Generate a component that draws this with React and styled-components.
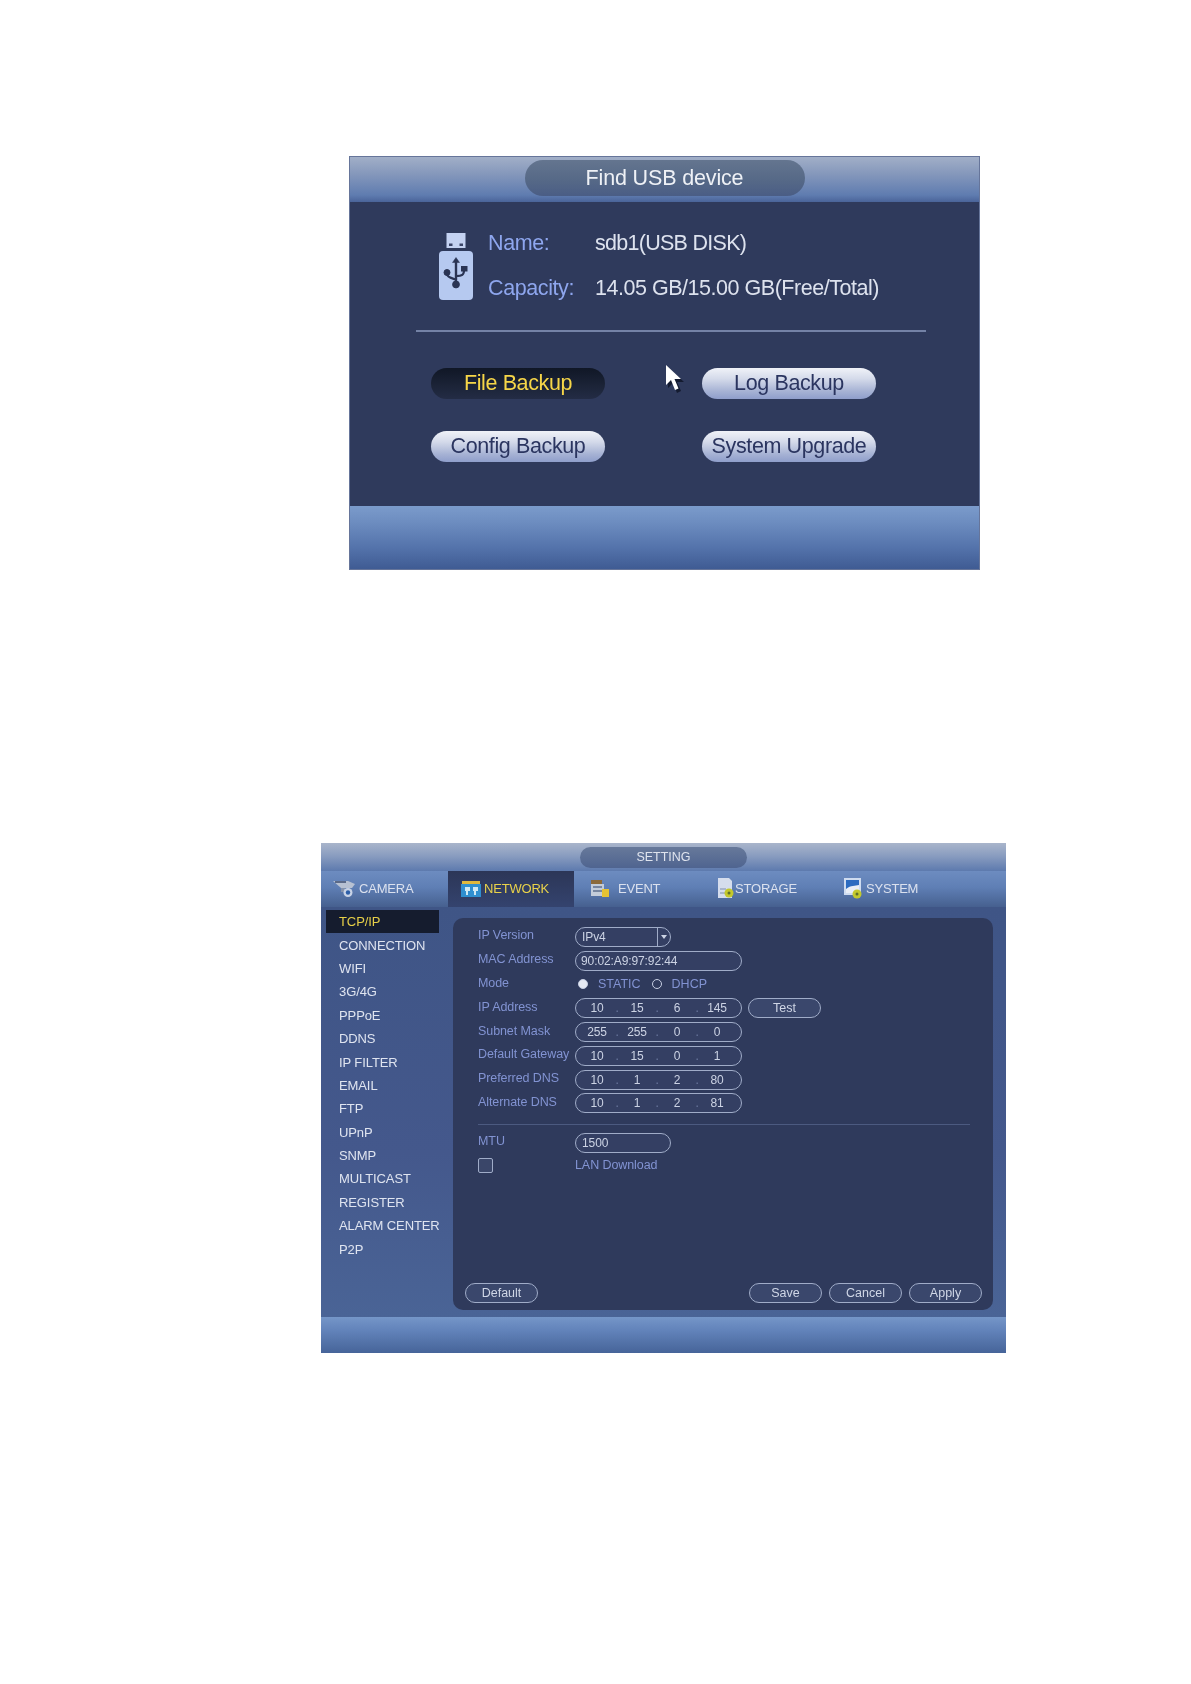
import React from "react";
import styled, { createGlobalStyle } from "styled-components";

const Global = createGlobalStyle`
  html, body { margin: 0; padding: 0; background: #fff; }
  body { font-family: "Liberation Sans", Arial, sans-serif; }
`;

const Page = styled.div`
  width: 1191px; height: 1684px; box-sizing: border-box;
  padding-top: 156px; background: #fff;
  display: flex; flex-direction: column; align-items: flex-start;
`;

/* ---------- first dialog ---------- */
const UsbDialog = styled.section`
  position: relative;
  margin-left: 349px; width: 631px; height: 414px;
  display: flex; flex-direction: column;
  filter: blur(0.4px);
  outline: 1px solid #66759a; outline-offset: -1px;
`;
const UsbHeader = styled.header`
  height: 46px; flex: none;
  display: flex; align-items: center; justify-content: center;
  background: linear-gradient(180deg, #a3b0c8 0%, #8497bb 40%, #5f7cb0 85%, #4a6499 100%);
`;
const UsbTitle = styled.div`
  width: 280px; height: 36px; margin-top: -2px; border-radius: 18px;
  display: flex; align-items: center; justify-content: center;
  background: linear-gradient(180deg, #64758f 0%, #566987 55%, #4a5d85 100%);
  color: #eef1f6; font-size: 21.5px; letter-spacing: -0.15px;
`;
const UsbBody = styled.div`
  flex: 1; background: #2f3a5c; padding-top: 19px;
  display: flex; flex-direction: column;
`;
const InfoRow = styled.div`
  margin-left: 90px; display: flex; align-items: center; gap: 15px;
`;
const InfoGrid = styled.div`
  display: grid; grid-template-columns: 107px auto; grid-auto-rows: 45px;
  align-items: center; font-size: 21.5px; letter-spacing: -0.4px;
`;
const InfoLabel = styled.span` color: #8ea6ee; `;
const InfoValue = styled.span`
  color: #dde2ee; letter-spacing: ${p => p.$ls}px;
`;
const Rule = styled.div`
  margin: 19px 0 0 67px; width: 510px; height: 2px; background: #7482a6;
`;
const BackupGrid = styled.div`
  margin: 36px 0 0 82px;
  display: grid; grid-template-columns: 174px 174px; grid-auto-rows: 31px;
  column-gap: 97px; row-gap: 32px;
`;
const BackupButton = styled.button`
  border: 0; padding: 0 0 1px; border-radius: 16px;
  font: 21.5px "Liberation Sans", Arial, sans-serif;
  letter-spacing: -0.38px;
  white-space: nowrap;
  color: ${p => (p.$active ? "#f6d648" : "#2b3560")};
  background: ${p => p.$active
    ? "linear-gradient(180deg, #101726 0%, #1c2438 60%, #232c45 100%)"
    : "linear-gradient(180deg, #f0f2f8 0%, #d4daea 35%, #a6b2d4 75%, #8f9ecb 100%)"};
`;
const UsbFooter = styled.footer`
  height: 64px; flex: none;
  background: linear-gradient(180deg, #7b9bcb 0%, #6d8dc0 25%, #5473ab 65%, #3e5a92 100%);
`;
const Cursor = styled.svg`
  position: absolute; left: 314px; top: 208px; width: 22px; height: 30px;
`;

/* ---------- settings dialog ---------- */
const SettingDialog = styled.section`
  margin: 273px 0 0 321px; width: 685px; height: 510px;
  display: flex; flex-direction: column;
  filter: blur(0.6px);
  background: #415a90;
`;
const SettingHeader = styled.header`
  height: 28px; flex: none; display: flex; justify-content: center; align-items: center;
  background: linear-gradient(180deg, #a9b5cb 0%, #8a9dc0 45%, #5d7aae 100%);
`;
const SettingTitle = styled.div`
  width: 167px; height: 21px; border-radius: 11px;
  display: flex; align-items: center; justify-content: center;
  background: linear-gradient(180deg, #67799a 0%, #4f6490 100%);
  color: #dfe4ee; font-size: 12.5px;
`;
const TabBar = styled.nav`
  height: 36px; flex: none; display: flex;
  background: linear-gradient(180deg, #6d8cc0 0%, #5f7fb5 45%, #46608f 100%);
`;
const Tab = styled.div`
  width: ${p => p.$w}px; flex: none; box-sizing: border-box;
  padding: 0 0 2px ${p => p.$pad}px;
  display: flex; align-items: center; gap: ${p => p.$gap}px;
  font-size: 13px; letter-spacing: -0.2px;
  color: ${p => (p.$active ? "#e8d24a" : "#dbe1ee")};
  background: ${p => (p.$active ? "linear-gradient(180deg, #2c3657 0%, #34436e 100%)" : "transparent")};
`;
const TabIcon = styled.svg`
  width: ${p => p.$w || 22}px; height: 22px; flex: none;
`;
const Main = styled.div`
  flex: 1; min-height: 0; display: flex;
  background: linear-gradient(180deg, #3f5586 0%, #44588c 60%, #4a6496 100%);
`;
const Sidebar = styled.aside`
  width: 132px; flex: none; box-sizing: border-box; padding: 3px 0 0 5px;
  display: flex; flex-direction: column;
`;
const SideItem = styled.div`
  width: 113px; height: 23.4px; flex: none; box-sizing: border-box;
  padding-left: 13px; display: flex; align-items: center;
  font-size: 13px; white-space: nowrap; letter-spacing: -0.1px;
  color: ${p => (p.$active ? "#e6cf48" : "#dfe4f0")};
  background: ${p => (p.$active ? "#151c2e" : "transparent")};
`;
const Content = styled.div`
  width: 540px; margin: 11px 0 7px; border-radius: 10px;
  background: #2f3a5c; display: flex; flex-direction: column;
  justify-content: space-between;
`;
const Form = styled.div`
  padding: 7px 23px 0 25px; display: flex; flex-direction: column;
`;
const FormRow = styled.div`
  height: ${p => p.$h || 23.8}px; flex: none;
  display: grid; grid-template-columns: 97px 1fr; align-items: center;
`;
const Label = styled.span`
  font-size: 12.5px; color: #8293d2; white-space: nowrap; letter-spacing: -0.08px;
  padding-bottom: ${p => p.$lift ?? 3}px;
`;
const Controls = styled.div`
  display: flex; align-items: center; gap: ${p => p.$gap ?? 6}px;
`;
const Field = styled.div`
  width: ${p => p.$w}px; height: 20px; box-sizing: border-box;
  border: 1.5px solid #a0acc8; border-radius: 10px;
  display: flex; align-items: center; padding-left: ${p => p.$pad || 6}px;
  font-size: 12px; color: #ccd3e4; position: relative;
  letter-spacing: -0.1px; background: #343f63;
`;
const Octet = styled.span` width: 31px; flex: none; text-align: center; `;
const Dot = styled.span` width: 9px; flex: none; text-align: center; color: #6c7aa0; `;
const SelectArrow = styled.span`
  position: absolute; right: 0; top: 0; bottom: 0; width: 12px;
  border-left: 1px solid #a0acc8; display: flex; align-items: center; justify-content: center;
  &::after {
    content: ""; border-left: 3px solid transparent; border-right: 3px solid transparent;
    border-top: 4px solid #ccd3e4;
  }
`;
const Radio = styled.span`
  width: 10px; height: 10px; border-radius: 50%; box-sizing: border-box; margin-left: 3px;
  border: 1.5px solid #c6cee2; background: ${p => (p.$on ? "#e6eaf4" : "transparent")};
  margin-right: 10px;
`;
const ModeText = styled.span`
  font-size: 12.5px; color: #8293d2; margin-right: 8px; padding-bottom: 1px;
`;
const OutlineButton = styled.div`
  width: 73px; height: 20px; flex: none; box-sizing: border-box;
  border: 1.5px solid #a0acc8; border-radius: 10px;
  display: flex; align-items: center; justify-content: center;
  font-size: 12.5px; color: #cfd6e6;
  background: #3a476c;
`;
const FormRule = styled.div`
  height: 1px; background: #4c5a80; margin: 9px 0 7px; width: 492px;
`;
const CheckBox = styled.span`
  width: 15px; height: 15px; box-sizing: border-box; display: block;
  border: 1.5px solid #a0acc8; border-radius: 2px; background: #3a4669;
`;
const ButtonBar = styled.div`
  padding: 0 11px 7px 12px; display: flex; align-items: center; gap: 7px;
`;
const Spacer = styled.div` flex: 1; `;
const SmallFooter = styled.footer`
  height: 36px; flex: none;
  background: linear-gradient(180deg, #7596c8 0%, #6384bb 35%, #466499 100%);
`;

const ipRows = [
  ["IP Address", ["10", "15", "6", "145"]],
  ["Subnet Mask", ["255", "255", "0", "0"]],
  ["Default Gateway", ["10", "15", "0", "1"]],
  ["Preferred DNS", ["10", "1", "2", "80"]],
  ["Alternate DNS", ["10", "1", "2", "81"]],
];
const sideItems = ["TCP/IP","CONNECTION","WIFI","3G/4G","PPPoE","DDNS","IP FILTER","EMAIL","FTP","UPnP","SNMP","MULTICAST","REGISTER","ALARM CENTER","P2P"];

const IpField = ({ values }) => (
  <Field $w={167} $pad={5.5}>
    {values.map((v, i) => (
      <React.Fragment key={i}>
        <Octet>{v}</Octet>
        {i < 3 && <Dot>.</Dot>}
      </React.Fragment>
    ))}
  </Field>
);

export default function App() {
  return (
    <Page>
      <Global />
      <UsbDialog>
        <UsbHeader><UsbTitle>Find USB device</UsbTitle></UsbHeader>
        <UsbBody>
          <InfoRow>
            <svg width="34" height="67" viewBox="0 0 34 67">
              <path d="M7.500 0h19v15h-19z" fill="#c4d2f2" />
              <path d="M10 10.500h3.500v2.500H10zM20.500 10.500H24v2.500h-3.500z" fill="#3a4568" />
              <rect x="0" y="18" width="34" height="49" rx="4" fill="#b6c9f0" />
              <g fill="#2a3454" stroke="#2a3454">
                <path d="M17 28v23" strokeWidth="2.400" />
                <path d="M17 24.500l-3.500 5h7z" strokeWidth="0.500" />
                <circle cx="17" cy="51.500" r="3.400" />
                <circle cx="8" cy="39.500" r="3" />
                <path d="M8 41c0 4 9 5 9 6" fill="none" strokeWidth="2.200" />
                <path d="M17 43c6 0 8-1 8-6" fill="none" strokeWidth="2.200" />
                <rect x="22.500" y="33.500" width="5.500" height="4.500" />
              </g>
            </svg>
            <InfoGrid>
              <InfoLabel>Name:</InfoLabel><InfoValue $ls={-0.72}>sdb1(USB DISK)</InfoValue>
              <InfoLabel>Capacity:</InfoLabel><InfoValue $ls={-0.47}>14.05 GB/15.00 GB(Free/Total)</InfoValue>
            </InfoGrid>
          </InfoRow>
          <Rule />
          <BackupGrid>
            <BackupButton $active>File Backup</BackupButton>
            <BackupButton>Log Backup</BackupButton>
            <BackupButton>Config Backup</BackupButton>
            <BackupButton>System Upgrade</BackupButton>
          </BackupGrid>
        </UsbBody>
        <UsbFooter />
        <Cursor viewBox="0 0 22 30">
          <path d="M5 3l0 21 5-5 4 10 4-2-4-9h7z" fill="#141b30" />
          <path d="M3 1l0 20 5-5 4 10 3.500-1.500-4-9.500h6.500z" fill="#fff" />
        </Cursor>
      </UsbDialog>

      <SettingDialog>
        <SettingHeader><SettingTitle>SETTING</SettingTitle></SettingHeader>
        <TabBar>
          <Tab $w={127} $pad={12} $gap={4}>
            <TabIcon viewBox="0 0 22 22">
              <path d="M0 4h15l7 3-3 4H8z" fill="#b7c1d2" />
              <path d="M2 4h11v2H2z" fill="#5b6a88" />
              <path d="M8 11h4v4H8z" fill="#8593ac" />
              <circle cx="15" cy="15.500" r="4.500" fill="#c8d3e6" />
              <circle cx="15" cy="15.500" r="2.200" fill="#2c5ea8" />
            </TabIcon>
            CAMERA
          </Tab>
          <Tab $w={126} $pad={12} $gap={2} $active>
            <TabIcon viewBox="0 0 22 22">
              <path d="M2 4h18v3H2z" fill="#e0b83c" />
              <path d="M1 7h20v13H1z" fill="#2f8fd0" />
              <path d="M5 10h5v4H8v4H6v-4H5zM13 10h5v4h-2v4h-2v-4h-1z" fill="#cfeaf6" />
            </TabIcon>
            NETWORK
          </Tab>
          <Tab $w={126} $pad={16} $gap={8}>
            <TabIcon $w={20} viewBox="0 0 20 22">
              <path d="M1 3h11v4H1z" fill="#8c6a3a" />
              <path d="M1 7h13v12H1z" fill="#c3ccd9" />
              <path d="M3 9h9v2H3zM3 13h9v2H3z" fill="#7786a0" />
              <path d="M12 12h7v8h-7z" fill="#e4c233" />
            </TabIcon>
            EVENT
          </Tab>
          <Tab $w={126} $pad={17} $gap={1}>
            <TabIcon $w={17} viewBox="0 0 17 22">
              <path d="M1 1h11l3 3v17H1z" fill="#d5dded" />
              <path d="M3 11h6v2H3zM3 15h6v2H3z" fill="#aab6cc" />
              <circle cx="12" cy="16" r="4.500" fill="#c3c82c" />
              <circle cx="12" cy="16" r="1.500" fill="#5d6f2a" />
            </TabIcon>
            STORAGE
          </Tab>
          <Tab $w={180} $pad={16} $gap={2}>
            <TabIcon viewBox="0 0 22 22">
              <path d="M2 1h17v17H2z" fill="#cfdcf0" />
              <path d="M4 3h13v13H4z" fill="#2c6bc0" />
              <path d="M4 12c5-4 9-3 13-4v8H4z" fill="#e9eef6" />
              <circle cx="15" cy="17" r="4.500" fill="#c3c82c" />
              <circle cx="15" cy="17" r="1.500" fill="#5d6f2a" />
            </TabIcon>
            SYSTEM
          </Tab>
        </TabBar>
        <Main>
          <Sidebar>
            {sideItems.map((s, i) => <SideItem key={s} $active={i === 0}>{s}</SideItem>)}
          </Sidebar>
          <Content>
            <Form>
              <FormRow>
                <Label>IP Version</Label>
                <Field $w={96}>IPv4<SelectArrow /></Field>
              </FormRow>
              <FormRow>
                <Label>MAC Address</Label>
                <Field $w={167} $pad={5}>90:02:A9:97:92:44</Field>
              </FormRow>
              <FormRow>
                <Label $lift={2}>Mode</Label>
                <Controls $gap={0}>
                  <Radio $on /><ModeText>STATIC</ModeText>
                  <Radio /><ModeText>DHCP</ModeText>
                </Controls>
              </FormRow>
              {ipRows.map(([label, values], i) => (
                <FormRow key={label}>
                  <Label>{label}</Label>
                  <Controls>
                    <IpField values={values} />
                    {i === 0 && <OutlineButton>Test</OutlineButton>}
                  </Controls>
                </FormRow>
              ))}
              <FormRule />
              <FormRow $h={22}>
                <Label $lift={4}>MTU</Label>
                <Field $w={96} $pad={6}>1500</Field>
              </FormRow>
              <FormRow $h={22}>
                <CheckBox />
                <Label $lift={0}>LAN Download</Label>
              </FormRow>
            </Form>
            <ButtonBar>
              <OutlineButton>Default</OutlineButton>
              <Spacer />
              <OutlineButton>Save</OutlineButton>
              <OutlineButton>Cancel</OutlineButton>
              <OutlineButton>Apply</OutlineButton>
            </ButtonBar>
          </Content>
        </Main>
        <SmallFooter />
      </SettingDialog>
    </Page>
  );
}
